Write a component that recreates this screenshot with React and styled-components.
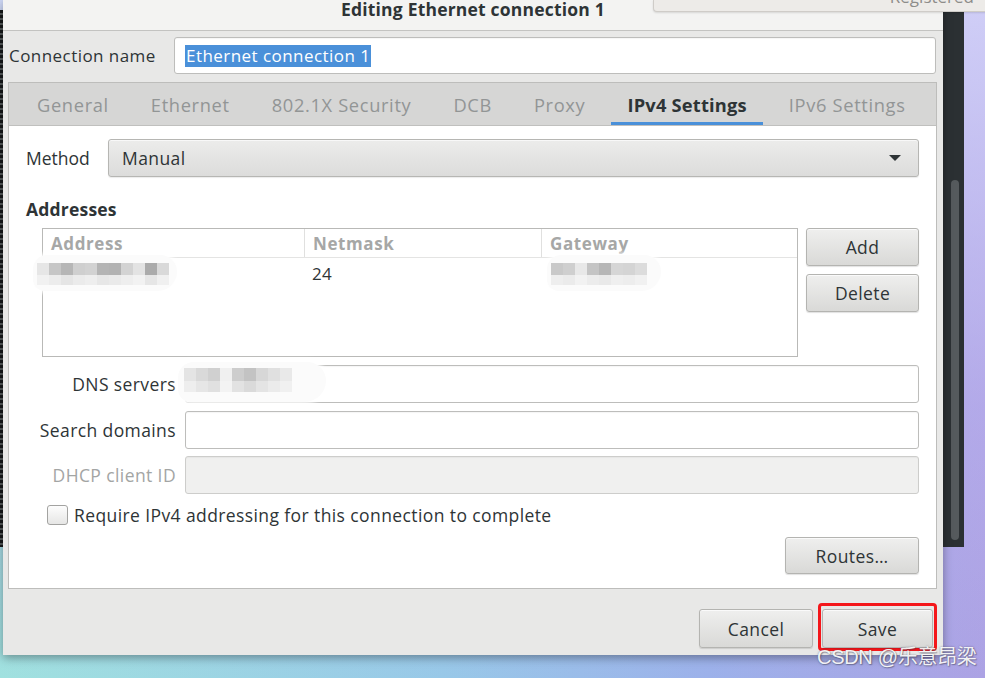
import React from "react";
import styled, { createGlobalStyle } from "styled-components";

const GlobalStyle = createGlobalStyle`
  html, body { margin: 0; padding: 0; }
  body {
    font-family: "Open Sans", "Noto Sans", sans-serif;
    color: #2e3436;
    overflow: hidden;
  }
  * { box-sizing: border-box; }
`;

const Desktop = styled.div`
  position: relative;
  width: 985px;
  height: 678px;
  overflow: hidden;
  background:
    linear-gradient(to bottom, rgba(214, 214, 250, 0.85) 0%, rgba(190, 180, 240, 0.4) 60%, rgba(0, 0, 0, 0) 100%),
    linear-gradient(90deg, #a0e1df 0%, #98c8e8 45%, #9cb1ea 72%, #aca2e4 100%);
`;

const BackWindow = styled.div`
  position: absolute;
  left: 0;
  top: 10px;
  width: 964px;
  height: 537px;
  display: flex;
  justify-content: flex-end;
  padding: 170px 5px 7px 0;
  background:
    repeating-linear-gradient(to bottom, #16191a 0 3px, #555a5c 3px 5px) left top / 3px 100% no-repeat,
    #2b3033;
`;

const Thumb = styled.div`
  width: 8px;
  border-radius: 4px;
  background: #555a5d;
`;

const Popup = styled.div`
  position: absolute;
  left: 653px;
  top: 0;
  width: 340px;
  height: 12px;
  overflow: hidden;
  display: flex;
  justify-content: flex-end;
  padding-right: 18px;
  background: #edebe8;
  border: 1px solid #cfccc8;
  border-top: none;
  border-radius: 0 0 0 4px;
  box-shadow: 0 1px 2px rgba(0, 0, 0, 0.12);
`;

const PopupText = styled.span`
  font-size: 17px;
  line-height: 17px;
  margin-top: -12px;
  color: #8d8d8a;
`;

const Dialog = styled.div`
  position: absolute;
  left: 3px;
  top: 0;
  width: 940px;
  height: 655px;
  display: flex;
  flex-direction: column;
  background: #e8e8e7;
  box-shadow: 0 3px 9px rgba(0, 0, 0, 0.35);
`;

const TitleBar = styled.div`
  height: 31px;
  flex: none;
  display: flex;
  justify-content: center;
  padding-top: 1px;
  background: #f3f3f2;
  border-bottom: 1px solid #c3c3c1;
`;

const Title = styled.div`
  font-size: 17.5px;
  font-weight: 700;
  line-height: 17px;
  letter-spacing: 0.2px;
  color: #2e3436;
`;

const Body = styled.div`
  flex: 1;
  display: flex;
  flex-direction: column;
  padding: 6px 6px 4px 5px;
`;

const NameRow = styled.div`
  display: flex;
  align-items: center;
  padding-left: 1px;
  margin-right: 1px;
`;

const NameLabel = styled.div`
  width: 165px;
  font-size: 17px;
  letter-spacing: 0.45px;
`;

const TextInput = styled.div`
  position: relative;
  flex: 1;
  height: ${(p) => p.h || 38}px;
  display: flex;
  align-items: center;
  padding: 0 10px;
  background: ${(p) => (p.disabled ? "#f0f0ef" : "#ffffff")};
  border: 1px solid ${(p) => (p.disabled ? "#cdcdcb" : "#bdbdbb")};
  border-radius: 3px;
  box-shadow: inset 0 1px 1px rgba(0, 0, 0, 0.04);
`;

const Selected = styled.span`
  background: #4a90d9;
  color: #ffffff;
  font-size: 17px;
  line-height: 22px;
  letter-spacing: 0.45px;
  padding: 0 1px;
`;

const Notebook = styled.div`
  flex: 1;
  margin-top: 8px;
  display: flex;
  flex-direction: column;
  border: 1px solid #bdbdbb;
  background: #ffffff;
`;

const TabBar = styled.div`
  display: flex;
  gap: 10px;
  padding-left: 12px;
  background: #d6d6d5;
  border-bottom: 1px solid #c0c0be;
`;

const Tab = styled.div`
  height: 42px;
  display: flex;
  align-items: center;
  padding: 3px 16px 0;
  font-size: 18.3px;
  letter-spacing: ${(p) => (p.active ? 0.2 : 0.65)}px;
  font-weight: ${(p) => (p.active ? 700 : 400)};
  color: ${(p) => (p.active ? "#2e3436" : "#929595")};
  border-bottom: 3px solid ${(p) => (p.active ? "#4a90d9" : "transparent")};
  white-space: nowrap;
`;

const Panel = styled.div`
  flex: 1;
  display: flex;
  flex-direction: column;
  padding: 13px 17px 0 17px;
  font-size: 17.5px;
  letter-spacing: 0.4px;
`;

const MethodRow = styled.div`
  display: flex;
  align-items: center;
`;

const MethodLabel = styled.div`
  width: 82px;
  letter-spacing: 0;
`;

const Combo = styled.div`
  flex: 1;
  height: 38px;
  display: flex;
  align-items: center;
  justify-content: space-between;
  padding: 0 17px 0 13px;
  background: linear-gradient(to bottom, #ececeb, #dcdcdb);
  border: 1px solid #b6b6b3;
  border-radius: 3px;
  box-shadow: inset 0 1px #f8f8f8, 0 1px 1px rgba(0, 0, 0, 0.08);
`;

const Arrow = styled.span`
  width: 0;
  height: 0;
  border-left: 6px solid transparent;
  border-right: 6px solid transparent;
  border-top: 6px solid #2e3436;
`;

const SectionTitle = styled.div`
  margin-top: 20px;
  font-weight: 700;
  line-height: 24px;
  letter-spacing: 0.2px;
`;

const AddressArea = styled.div`
  display: flex;
  gap: 8px;
  margin-top: 7px;
  padding-left: 16px;
`;

const Table = styled.div`
  flex: 1;
  height: 129px;
  border: 1px solid #b9b9b7;
  background: #ffffff;
`;

const TableRow = styled.div`
  position: relative;
  display: grid;
  grid-template-columns: 262px 237px 1fr;
  height: ${(p) => (p.head ? 29 : 30)}px;
  border-bottom: ${(p) => (p.head ? "1px solid #e4e4e3" : "none")};
`;

const Cell = styled.div`
  display: flex;
  align-items: center;
  padding-left: ${(p) => (p.head ? 8 : 7)}px;
  font-size: 17px;
  letter-spacing: ${(p) => (p.head ? 0.6 : 0.4)}px;
  font-weight: ${(p) => (p.head ? 700 : 400)};
  color: ${(p) => (p.head ? "#a6a7a6" : "#2e3436")};
  border-right: ${(p) => (p.head && !p.last ? "1px solid #e0e0df" : "none")};
`;

const SideButtons = styled.div`
  width: 113px;
  display: flex;
  flex-direction: column;
  gap: 8px;
`;

const Button = styled.div`
  height: ${(p) => p.h || 38}px;
  width: ${(p) => (p.w ? `${p.w}px` : "auto")};
  display: flex;
  align-items: center;
  justify-content: center;
  font-size: 17.5px;
  letter-spacing: 0.4px;
  color: #2e3436;
  background: linear-gradient(to bottom, #efefee, #d9d9d7);
  border: 1px solid #b4b4b1;
  border-radius: 3px;
  box-shadow: inset 0 1px #fafafa, 0 1px 1px rgba(0, 0, 0, 0.12);
`;

const Smudge = styled.div`
  position: absolute;
  left: ${(p) => p.x}px;
  top: ${(p) => p.y}px;
  padding: ${(p) => p.pad || "8px 8px 6px 4px"};
  background: #fbfbfb;
  border-radius: 22px 26px 30px 18px;
  box-shadow: 0 0 4px 2px rgba(255, 255, 255, 0.9);
  display: grid;
  grid-template-columns: repeat(${(p) => p.cols}, 12px);
  grid-auto-rows: ${(p) => p.rows || "12px 10px"};
`;

const Pixel = styled.span`
  background: ${(p) => p.c};
`;

const Mosaic = ({ x, y, top, bottom, pad, rows }) => (
  <Smudge x={x} y={y} cols={top.length} pad={pad} rows={rows}>
    {top.concat(bottom).map((c, i) => (
      <Pixel key={i} c={c} />
    ))}
  </Smudge>
);

const FormGrid = styled.div`
  display: grid;
  grid-template-columns: 150px 1fr;
  column-gap: 9px;
  row-gap: 7.5px;
  margin-top: 8px;
  align-items: center;
`;

const FormLabel = styled.div`
  text-align: right;
  white-space: nowrap;
  color: ${(p) => (p.dim ? "#a3a5a4" : "#2e3436")};
`;

const CheckRow = styled.div`
  display: flex;
  align-items: center;
  gap: 6px;
  margin-top: 9px;
  padding-left: 21px;
  height: 24px;
`;

const CheckBox = styled.span`
  width: 21px;
  height: 20px;
  border: 1px solid #a3a3a1;
  border-radius: 3px;
  background: linear-gradient(to bottom, #fdfdfd, #e6e6e5);
`;

const RoutesRow = styled.div`
  display: flex;
  justify-content: flex-end;
  margin-top: 10px;
`;

const Actions = styled.div`
  display: flex;
  justify-content: flex-end;
  align-items: flex-start;
  gap: 5px;
  margin-top: 14px;
`;

const CancelSlot = styled.div`
  margin-top: 6px;
`;

const RedFrame = styled.div`
  padding: 3px 1px 0 1px;
  border: 3px solid #f4161a;
  border-radius: 4px;
`;

const Watermark = styled.div`
  position: absolute;
  left: 817px;
  top: 645px;
  font-family: "Liberation Sans", "Noto Sans CJK SC", sans-serif;
  font-size: 20px;
  line-height: 24px;
  color: rgba(255, 255, 255, 0.92);
  text-shadow: 0 0 2px rgba(60, 60, 80, 0.6), 1px 1px 1px rgba(60, 60, 80, 0.4);
  letter-spacing: -0.3px;
`;

const tabs = ["General", "Ethernet", "802.1X Security", "DCB", "Proxy", "IPv4 Settings", "IPv6 Settings"];

export default function App() {
  return (
    <Desktop>
      <GlobalStyle />
      <BackWindow>
        <Thumb />
      </BackWindow>

      <Dialog>
        <TitleBar>
          <Title>Editing Ethernet connection 1</Title>
        </TitleBar>
        <Body>
          <NameRow>
            <NameLabel>Connection name</NameLabel>
            <TextInput h={37}>
              <Selected>Ethernet connection 1</Selected>
            </TextInput>
          </NameRow>

          <Notebook>
            <TabBar>
              {tabs.map((t) => (
                <Tab key={t} active={t === "IPv4 Settings"}>
                  {t}
                </Tab>
              ))}
            </TabBar>
            <Panel>
              <MethodRow>
                <MethodLabel>Method</MethodLabel>
                <Combo>
                  <span>Manual</span>
                  <Arrow />
                </Combo>
              </MethodRow>

              <SectionTitle>Addresses</SectionTitle>
              <AddressArea>
                <Table>
                  <TableRow head>
                    <Cell head>Address</Cell>
                    <Cell head>Netmask</Cell>
                    <Cell head last>Gateway</Cell>
                  </TableRow>
                  <TableRow>
                    <Cell />
                    <Cell>24</Cell>
                    <Cell />
                    <Mosaic
                      x={-10}
                      y={-3}
                      top={["#e6e6e6", "#c6c6c6", "#b6b6b6", "#cfcfcf", "#d2d2d2", "#b4b4b4", "#b2b2b2", "#d3d3d3", "#e3e3e3", "#ababab", "#d9d9d9"]}
                      bottom={["#f1f1f1", "#ececec", "#e5e5e5", "#ebebeb", "#eeeeee", "#e7e7e7", "#eaeaea", "#eeeeee", "#f2f2f2", "#e6e6e6", "#f0f0f0"]}
                    />
                    <Mosaic
                      x={504}
                      y={-3}
                      pad="8px 14px 6px 4px"
                      top={["#c9c9c9", "#cfcfcf", "#e8e8e8", "#c4c4c4", "#b6b6b6", "#d6d6d6", "#d4d4d4", "#dcdcdc"]}
                      bottom={["#eeeeee", "#ebebeb", "#f2f2f2", "#ececec", "#e9e9e9", "#efefef", "#ededed", "#f1f1f1"]}
                    />
                  </TableRow>
                </Table>
                <SideButtons>
                  <Button>Add</Button>
                  <Button>Delete</Button>
                </SideButtons>
              </AddressArea>

              <FormGrid>
                <FormLabel>DNS servers</FormLabel>
                <TextInput>
                  <Mosaic
                    x={-8}
                    y={-4}
                    pad="6px 34px 10px 6px"
                    rows="13px 11px"
                    top={["#e4e4e4", "#d9d9d9", "#d0d0d0", "#f0f0f0", "#cdcdcd", "#c3c3c3", "#d7d7d7", "#e0e0e0", "#e9e9e9"]}
                    bottom={["#eeeeee", "#e6e6e6", "#e0e0e0", "#f3f3f3", "#e2e2e2", "#dadada", "#e4e4e4", "#ebebeb", "#f0f0f0"]}
                  />
                </TextInput>
                <FormLabel>Search domains</FormLabel>
                <TextInput />
                <FormLabel dim>DHCP client ID</FormLabel>
                <TextInput disabled />
              </FormGrid>

              <CheckRow>
                <CheckBox />
                <span>Require IPv4 addressing for this connection to complete</span>
              </CheckRow>

              <RoutesRow>
                <Button w={134} h={37}>Routes…</Button>
              </RoutesRow>
            </Panel>
          </Notebook>

          <Actions>
            <CancelSlot>
              <Button w={114} h={39}>Cancel</Button>
            </CancelSlot>
            <RedFrame>
              <Button w={111} h={39}>Save</Button>
            </RedFrame>
          </Actions>
        </Body>
      </Dialog>

      <Popup>
        <PopupText>Registered</PopupText>
      </Popup>
      <Watermark>CSDN @乐意昂梁</Watermark>
    </Desktop>
  );
}
